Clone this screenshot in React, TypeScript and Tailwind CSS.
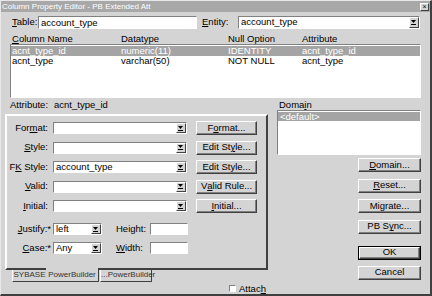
import React from "react";

const U = ({ children }: { children: React.ReactNode }) => <span className="underline underline-offset-1">{children}</span>;

const Arrow = () => (
  <span className="w-[10px] h-full bg-[#d4d4d4] border-l border-t border-t-white border-l-white border-r border-b border-r-[#404040] border-b-[#404040] flex items-center justify-center shrink-0">
    <svg width="6" height="5" viewBox="0 0 6 5">
      <path d="M0 0h5L2.5 3z" fill="#000" />
      <path d="M0 4.5h5" stroke="#000" strokeWidth="1" />
    </svg>
  </span>
);

const Combo = ({ value, className }: { value?: string; className: string }) => (
  <div className={`${className} h-[12px] bg-white border border-t-[#808080] border-l-[#808080] border-b-white border-r-white flex items-stretch`}>
    <span className="flex-1 pl-[2px] leading-[10px] truncate">{value}</span>
    <Arrow />
  </div>
);

const Field = ({ className, value }: { className: string; value?: string }) => (
  <div className={`${className} bg-white border border-t-[#808080] border-l-[#808080] border-b-white border-r-white pl-[2px] leading-[11px]`}>
    {value}
  </div>
);

const Btn = ({ children, def }: { children: React.ReactNode; def?: boolean }) => (
  <div className={`w-[63px] h-[14px] ${def ? "border border-black" : ""}`}>
    <div className="w-full h-full bg-[#d4d4d4] border border-t-white border-l-white border-b-[#404040] border-r-[#404040] shadow-[inset_-1px_-1px_0_#808080] flex items-center justify-center">
      {children}
    </div>
  </div>
);

const SmallBtn = ({ children }: { children: React.ReactNode }) => (
  <div className="w-[61px] h-[14px] bg-[#d4d4d4] border border-t-white border-l-white border-b-[#404040] border-r-[#404040] shadow-[inset_-1px_-1px_0_#808080] flex items-center justify-center">
    {children}
  </div>
);

const rows = [
  { label: <>For<U>m</U>at:</>, value: "", btn: <>F<U>o</U>rmat...</> },
  { label: <><U>S</U>tyle:</>, value: "", btn: <>Edit St<U>y</U>le...</> },
  { label: <>F<U>K</U> Style:</>, value: "account_type", btn: <>Edit Style...</> },
  { label: <><U>V</U>alid:</>, value: "", btn: <>V<U>a</U>lid Rule...</> },
  { label: <><U>I</U>nitial:</>, value: "", btn: <><U>I</U>nitial...</> },
];

const columns = [
  ["acnt_type_id", "numeric(11)", "IDENTITY", "acnt_type_id"],
  ["acnt_type", "varchar(50)", "NOT NULL", "acnt_type"],
];

export default function App() {
  return (
    <div className="w-[432px] h-[296px] bg-[#d4d4d4] text-black text-[9.5px] font-['Liberation_Sans',Arial,sans-serif] flex flex-col overflow-hidden border-l border-t border-l-[#e8e8e8] border-t-[#e8e8e8] border-r-2 border-b-2 border-r-[#404040] border-b-[#404040]">
      {/* title bar */}
      <div className="h-[11px] bg-[#a8a8a8] text-white text-[8px] leading-[11px] pl-[1px] flex justify-between shrink-0">
        <span>Column Property Editor - PB Extended Att</span>
        <span className="w-[9px] h-[8px] mt-[2px] mr-[1px] bg-[#d4d4d4] border border-t-white border-l-white border-b-[#404040] border-r-[#404040] text-black text-[7px] leading-[6px] text-center">×</span>
      </div>

      {/* table / entity */}
      <div className="mt-[4px] h-[13px] flex items-center">
        <span className="w-[26px] ml-[11px]"><U>T</U>able:</span>
        <Field className="w-[159px] h-[13px]" value="account_type" />
        <span className="w-[36px] ml-[5px]"><U>E</U>ntity:</span>
        <Combo className="w-[182px] !h-[13px]" value="account_type" />
      </div>

      {/* column headers */}
      <div className="mt-[6px] h-[8px] leading-[8px] flex pl-[11px]">
        <span className="w-[109px]"><U>C</U>olumn Name</span>
        <span className="w-[107px]">Datatype</span>
        <span className="w-[74px]">Null Option</span>
        <span>Attribute</span>
      </div>

      {/* column list */}
      <div className="mt-[1px] ml-[9px] w-[411px] h-[54px] bg-white border border-t-[#808080] border-l-[#808080] border-b-white border-r-white pt-[1px] shrink-0">
        {columns.map((c, i) => (
          <div key={c[0]} className={`h-[10px] leading-[10px] flex pl-[1px] ${i === 0 ? "bg-[#a4a4a4] text-white" : ""}`}>
            <span className="w-[109px]">{c[0]}</span>
            <span className="w-[107px]">{c[1]}</span>
            <span className="w-[74px]">{c[2]}</span>
            <span>{c[3]}</span>
          </div>
        ))}
      </div>

      {/* main */}
      <div className="flex">
        <div className="ml-[4px] w-[263px] flex flex-col">
          <div className="h-[12px] leading-[12px] flex pl-[5px] mt-[1px]">
            <span className="w-[44px]">Attribute:</span>
            <span>acnt_type_id</span>
          </div>
          <div className="mt-[3px] h-[156px] border-2 border-t-white border-l-white border-b-[#404040] border-r-[#404040] flex flex-col pt-[5px]">
            <div className="flex flex-col gap-[5.5px]">
              {rows.map((r, i) => (
                <div key={i} className="h-[14px] flex items-center">
                  <span className="w-[41px] text-right">{r.label}</span>
                  <Combo className="ml-[5px] w-[134px]" value={r.value} />
                  <div className="ml-[9px]">
                    <SmallBtn>{r.btn}</SmallBtn>
                  </div>
                </div>
              ))}
            </div>
            <div className="mt-[10px] flex flex-col gap-[7px]">
              <div className="h-[12px] flex items-center">
                <span className="w-[44px] text-right"><U>J</U>ustify:*</span>
                <Combo className="ml-[2px] w-[49px]" value="left" />
                <span className="ml-[14px] w-[34px]">Height:</span>
                <Field className="w-[38px] h-[12px]" />
              </div>
              <div className="h-[12px] flex items-center">
                <span className="w-[44px] text-right"><U>C</U>ase:*</span>
                <Combo className="ml-[2px] w-[49px]" value="Any" />
                <span className="ml-[14px] w-[34px]"><U>W</U>idth:</span>
                <Field className="w-[38px] h-[12px]" />
              </div>
            </div>
          </div>
          {/* tabs */}
          <div className="h-[12px] flex text-[8px] leading-[10px] text-[#333]">
            <span className="ml-[7px] w-[34px] border-l border-b border-l-white border-b-[#404040] text-center">SYBASE</span>
            <span className="w-[53px] -mt-[2px] pt-[2px] bg-[#d4d4d4] border-r border-b border-r-[#404040] border-b-[#404040] text-center">PowerBuilder</span>
            <span className="ml-[1px] w-[52px] border-l border-r border-b border-l-white border-r-[#404040] border-b-[#404040] text-center">...PowerBuilder</span>
          </div>
        </div>

        <div className="ml-[9px] w-[144px] flex flex-col items-end">
          <div className="self-start h-[11px] leading-[11px] pl-[2px] mt-[1px]">Doma<U>i</U>n</div>
          <div className="w-[144px] h-[45px] bg-white border border-t-[#808080] border-l-[#808080] border-b-white border-r-white pt-[1px]">
            <div className="h-[9px] leading-[9px] bg-[#a4a4a4] text-white pl-[2px]">&lt;default&gt;</div>
          </div>
          <div className="mt-[3px] flex flex-col gap-[6.5px]">
            <Btn><U>D</U>omain...</Btn>
            <Btn><U>R</U>eset...</Btn>
            <Btn>Migrate...</Btn>
            <Btn>PB S<U>y</U>nc...</Btn>
          </div>
          <div className="mt-[12px] flex flex-col gap-[6px]">
            <Btn def>OK</Btn>
            <Btn>Cancel</Btn>
          </div>
        </div>
      </div>

      {/* attach */}
      <div className="mt-auto mb-[1px] h-[9px] flex items-center pl-[228px]">
        <span className="w-[7px] h-[7px] bg-white border border-t-[#808080] border-l-[#808080] border-b-white border-r-white" />
        <span className="ml-[3px] leading-[9px]">Attac<U>h</U></span>
      </div>
    </div>
  );
}
